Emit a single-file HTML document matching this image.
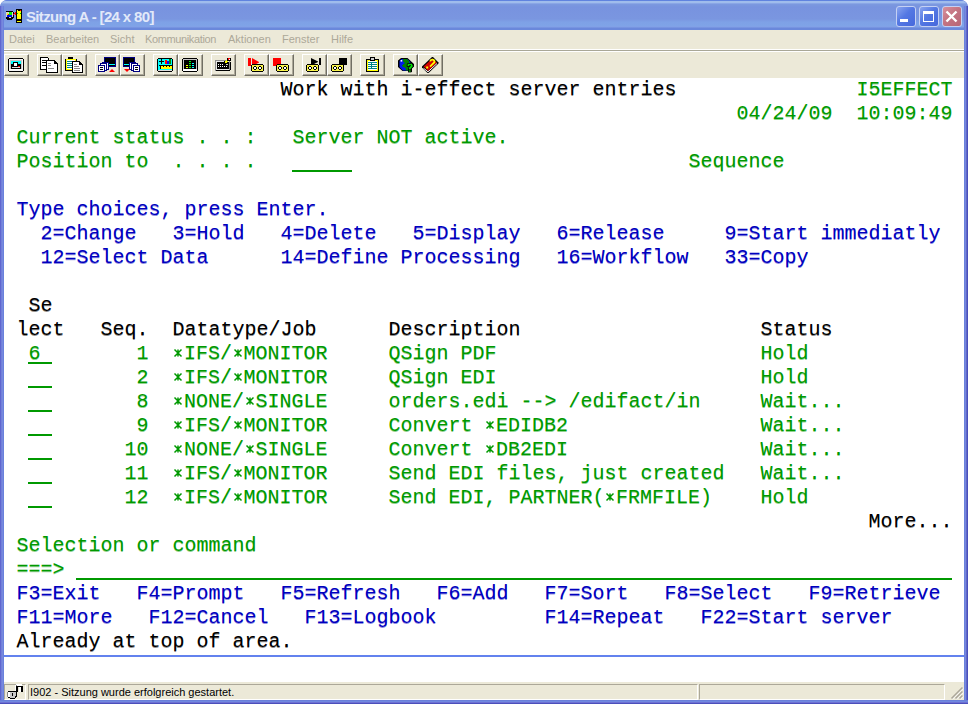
<!DOCTYPE html>
<html><head><meta charset="utf-8">
<style>
*{margin:0;padding:0;box-sizing:border-box}
html,body{width:968px;height:704px;overflow:hidden;background:#fff;position:relative}
body{font-family:"Liberation Sans",sans-serif}
#win{position:absolute;left:0;top:0;width:968px;height:704px;background:#6b83dc;border-radius:7px 7px 0 0}
#title{position:absolute;left:0;top:0;width:968px;height:30px;border-radius:8px 8px 0 0;overflow:hidden;
 background:linear-gradient(#6083df 0px,#6083df 1px,#a0bcec 1px,#a0bcec 3px,#8aa6e6 3px,#8aa6e6 4px,#7c99df 4px,#7893df 7px,#7a96e0 19px,#7ea1e6 22px,#7fa3e7 26px,#83a0e6 27px,#6a88db 28px,#6a88db 30px)}
#lb{position:absolute;left:0;top:6px;width:4px;height:698px;background:linear-gradient(90deg,#6066cf 0,#6066cf 1px,#7180da 1px,#7180da 2px,#7888de 2px,#7888de 3px,#6a82dc 3px)}
#rb{position:absolute;left:964px;top:6px;width:4px;height:698px;background:linear-gradient(90deg,#6b82dc 0,#6b82dc 1px,#7688de 1px,#7688de 2px,#6068c8 2px,#6068c8 3px,#4a50bb 3px)}
#bb{position:absolute;left:0;top:700px;width:968px;height:4px;background:linear-gradient(#6a7fd9 0,#6a7fd9 1px,#7089e0 1px,#7089e0 2px,#6f70d3 2px,#6f70d3 3px,#4a4fbb 3px)}
#ttext{position:absolute;left:26px;top:8px;font:bold 15px "Liberation Sans",sans-serif;color:#e2e9f9;letter-spacing:-0.65px;white-space:pre}
.tb{position:absolute;top:6px;width:20px;height:21px;border:1px solid #c4d0f3;border-radius:3px}
#menu{position:absolute;left:4px;top:30px;width:960px;height:20px;background:#ece9d8}
#menu span{position:absolute;top:3px;font-size:11px;color:#aca899}
#sep{position:absolute;left:4px;top:49px;width:960px;height:3px;background:linear-gradient(#fff 0,#fff 1px,#a9a797 1px,#a9a797 2px,#fff 2px)}
#sep2{position:absolute;left:4px;top:51px;width:960px;height:1px;background:#fff}
#tool{position:absolute;left:4px;top:52px;width:960px;height:26px;background:#ece9d8}
.btn{position:absolute;top:54px;width:25px;height:22px;border-top:1px solid #fff;border-left:1px solid #fff;border-right:1px solid #716f64;border-bottom:1px solid #716f64;box-shadow:inset -1px -1px 0 #aca899}
#term{position:absolute;left:4px;top:78px;width:960px;height:577px;background:#fff}
#scr{position:absolute;left:16.5px;top:78px}
#scr i{position:absolute;font-style:normal;font:normal 20px/24px "Liberation Mono",monospace;white-space:pre}
#scr u{position:absolute;height:2px;background:#009900}
.st{vertical-align:top;margin-left:-0.5px}.st path{stroke:currentColor;stroke-width:1.5;fill:none}
.g{color:#009900;text-shadow:0 1px 0 rgba(0,153,0,.45)}.b{color:#0000be;text-shadow:0 1px 0 rgba(0,0,190,.45)}.k{color:#000;text-shadow:0 1px 0 rgba(0,0,0,.45)}
#bline{position:absolute;left:4px;top:655px;width:960px;height:2px;background:#6382ee}
#blank{position:absolute;left:4px;top:657px;width:960px;height:25px;background:#fff}
#status{position:absolute;left:4px;top:682px;width:960px;height:18px;background:#ece9d8}
.pan{position:absolute;top:684px;height:16px;border-top:1px solid #aca899;border-left:1px solid #aca899;border-right:1px solid #fff;border-bottom:1px solid #fff}
#stext{position:absolute;left:30px;top:686px;font-size:11px;color:#000;white-space:pre}
</style></head><body>
<div id="win"></div>
<div id="title"><div id="ttext">Sitzung A - [24 x 80]</div></div><div id="lb"></div><div id="rb"></div><div id="bb"></div>
<div class="tb" style="left:896px;background:linear-gradient(135deg,#8aa5ef,#5478e3 45%,#4668dc)"><i style="position:absolute;left:3px;top:12px;width:8px;height:3px;background:#fff"></i></div>
<div class="tb" style="left:919px;background:linear-gradient(135deg,#8aa5ef,#5478e3 45%,#4668dc)"><i style="position:absolute;left:3px;top:4px;width:11px;height:11px;border:1px solid #fff;border-top-width:3px"></i></div>
<div class="tb" style="left:942px;background:linear-gradient(135deg,#d9909c,#c47482 45%,#b86676)"><svg style="position:absolute;left:0;top:0" width="20" height="20"><path d="M3.5 4.5l10 10M13.5 4.5l-10 10" stroke="#fff" stroke-width="2.4"/></svg></div>
<div id="menu"><span style="left:5px">Datei</span><span style="left:42px">Bearbeiten</span><span style="left:106px">Sicht</span><span style="left:141px;letter-spacing:-0.37px">Kommunikation</span><span style="left:224px">Aktionen</span><span style="left:278px">Fenster</span><span style="left:327px">Hilfe</span></div>
<div id="sep"></div>
<div id="tool"></div>
<div class="btn" style="left:4px"></div><div class="btn" style="left:37px"></div><div class="btn" style="left:62px"></div><div class="btn" style="left:95px"></div><div class="btn" style="left:120px"></div><div class="btn" style="left:153px"></div><div class="btn" style="left:178px"></div><div class="btn" style="left:211px"></div><div class="btn" style="left:244px"></div><div class="btn" style="left:269px"></div><div class="btn" style="left:302px"></div><div class="btn" style="left:327px"></div><div class="btn" style="left:360px"></div><div class="btn" style="left:393px"></div><div class="btn" style="left:418px"></div><svg style="position:absolute;left:0;top:0" width="460" height="80" shape-rendering="crispEdges">
<!-- title icon -->
<g>
<rect x="6" y="11" width="7" height="1" fill="#000"/>
<rect x="6" y="12" width="7" height="5" fill="#d8d8d0"/>
<rect x="13" y="12" width="1" height="6" fill="#000"/>
<rect x="7" y="13" width="1" height="3" fill="#ff0"/>
<rect x="9" y="12" width="3" height="3" fill="#0e0"/>
<rect x="8" y="14" width="1" height="1" fill="#f00"/>
<rect x="7" y="15" width="5" height="2" fill="#0010f0"/>
<rect x="6" y="17" width="7" height="3" fill="#000"/>
<rect x="9" y="17" width="2" height="1" fill="#d8d8c8"/>
<rect x="6" y="19" width="1" height="1" fill="#7b97e0"/>
<rect x="12" y="19" width="1" height="1" fill="#7b97e0"/>
<rect x="13" y="14" width="1" height="1" fill="#f00"/>
<rect x="14" y="13" width="1" height="1" fill="#f00"/>
<rect x="15" y="12" width="1" height="3" fill="#f00"/>
<rect x="16" y="9" width="6" height="14" fill="#000"/>
<rect x="17" y="10" width="4" height="9" fill="#ff0"/>
<rect x="18" y="10" width="2" height="1" fill="#000"/>
<rect x="20" y="10" width="1" height="1" fill="#f00"/>
<rect x="17" y="13" width="1" height="1" fill="#0c0"/>
<rect x="20" y="13" width="1" height="1" fill="#0c0"/>
<rect x="17" y="21" width="4" height="1" fill="#ff0"/>
</g>
<!-- 1 -->
<g>
<rect x="9" y="58" width="14" height="14" fill="#000"/>
<rect x="8" y="59" width="16" height="12" fill="#000"/>
<rect x="9" y="59" width="14" height="12" fill="#f4f4f4"/>
<rect x="10" y="60" width="12" height="9" fill="#c8c8c8"/>
<rect x="11" y="61" width="10" height="3" fill="#0ff"/>
<rect x="11" y="64" width="10" height="5" fill="#000"/>
<rect x="13" y="62" width="5" height="5" fill="#000"/>
<rect x="14" y="63" width="3" height="3" fill="#fff"/>
<rect x="12" y="67" width="8" height="1" fill="#ddd"/>
<rect x="18" y="66" width="2" height="1" fill="#f00"/>
<rect x="10" y="69" width="12" height="1" fill="#fff"/>
</g>
<!-- 2 copy -->
<g>
<path d="M40 57h7l2 2v11h-9z" fill="#000"/>
<path d="M41 58h6l1 1v10h-7z" fill="#fff"/>
<rect x="42" y="60" width="4" height="1" fill="#000"/>
<rect x="42" y="62" width="4" height="1" fill="#000"/>
<rect x="42" y="65" width="4" height="1" fill="#000"/>
<path d="M46 60h8l4 4v9h-12z" fill="#000"/>
<path d="M47 61h6l1 1v2h3v8h-10z" fill="#fff"/>
<rect x="48" y="63" width="3" height="1" fill="#888"/>
<rect x="48" y="65" width="3" height="1" fill="#888"/>
<rect x="48" y="68" width="6" height="1" fill="#888"/>
</g>
<!-- 3 paste -->
<g>
<rect x="68" y="57" width="5" height="2" fill="#000"/>
<rect x="65" y="59" width="12" height="12" fill="#000"/>
<rect x="66" y="59" width="10" height="11" fill="#ff0"/>
<rect x="67" y="60" width="8" height="9" fill="#fff"/>
<rect x="67" y="61" width="6" height="1" fill="#088"/>
<rect x="67" y="63" width="6" height="1" fill="#088"/>
<rect x="67" y="65" width="6" height="1" fill="#088"/>
<rect x="67" y="67" width="6" height="1" fill="#088"/>
<path d="M72 61h7l4 4v8h-11z" fill="#000"/>
<path d="M73 62h5l1 1v2h3v7h-9z" fill="#fff"/>
<rect x="74" y="64" width="3" height="1" fill="#888"/>
<rect x="74" y="66" width="5" height="1" fill="#888"/>
<rect x="74" y="68" width="6" height="1" fill="#888"/>
<rect x="74" y="70" width="6" height="1" fill="#888"/>
</g>
<!-- 4 -->
<g>
<rect x="104" y="57" width="12" height="10" fill="#000080"/>
<rect x="105" y="58" width="10" height="8" fill="#000"/>
<rect x="109" y="64" width="6" height="1" fill="#0ff"/>
<rect x="102" y="62" width="7" height="8" fill="#000080"/>
<rect x="103" y="63" width="5" height="6" fill="#fff"/>
<rect x="100" y="63" width="7" height="8" fill="#000080"/>
<rect x="101" y="64" width="5" height="6" fill="#fff"/>
<rect x="98" y="65" width="7" height="7" fill="#000080"/>
<rect x="99" y="66" width="5" height="5" fill="#fff"/>
<rect x="100" y="67" width="3" height="1" fill="#000"/>
<rect x="100" y="69" width="3" height="1" fill="#000"/>
<path d="M109 72h6l-3-3z" fill="#f00" shape-rendering="auto"/>
</g>
<!-- 5 -->
<g>
<rect x="123" y="57" width="12" height="10" fill="#000080"/>
<rect x="124" y="58" width="10" height="8" fill="#000"/>
<rect x="124" y="64" width="5" height="1" fill="#0ff"/>
<rect x="129" y="62" width="7" height="8" fill="#000080"/>
<rect x="130" y="63" width="5" height="6" fill="#fff"/>
<rect x="131" y="63" width="7" height="8" fill="#000080"/>
<rect x="132" y="64" width="5" height="6" fill="#fff"/>
<rect x="133" y="65" width="7" height="7" fill="#000080"/>
<rect x="134" y="66" width="5" height="5" fill="#fff"/>
<rect x="135" y="67" width="3" height="1" fill="#000"/>
<rect x="135" y="69" width="3" height="1" fill="#000"/>
<path d="M124 69h6l-3 3z" fill="#f00" shape-rendering="auto"/>
</g>
<!-- 6 -->
<g>
<rect x="158" y="58" width="14" height="14" fill="#000"/>
<rect x="157" y="59" width="16" height="12" fill="#000"/>
<rect x="158" y="59" width="14" height="12" fill="#0ff"/>
<rect x="158" y="70" width="14" height="1" fill="#ddd"/>
<rect x="159" y="61" width="5" height="1" fill="#000"/>
<rect x="161" y="59" width="1" height="5" fill="#000"/>
<rect x="165" y="60" width="2" height="4" fill="#f00"/>
<rect x="167" y="61" width="2" height="3" fill="#00f"/>
<rect x="169" y="59" width="2" height="5" fill="#080"/>
<rect x="159" y="65" width="13" height="1" fill="#000"/>
<rect x="160" y="66" width="12" height="3" fill="#ff0"/>
<rect x="160" y="66" width="1" height="3" fill="#000"/>
<rect x="163" y="66" width="1" height="1" fill="#000"/>
<rect x="166" y="66" width="1" height="1" fill="#000"/>
<rect x="169" y="66" width="1" height="1" fill="#000"/>
</g>
<!-- 7 -->
<g>
<rect x="183" y="58" width="14" height="14" fill="#000"/>
<rect x="182" y="59" width="16" height="12" fill="#000"/>
<rect x="183" y="59" width="14" height="12" fill="#c8c8c8"/>
<rect x="183" y="69" width="14" height="2" fill="#fff"/>
<rect x="184" y="60" width="12" height="9" fill="#000"/>
<rect x="189" y="61" width="2" height="1" fill="#0f0"/>
<rect x="189" y="63" width="2" height="1" fill="#0f0"/>
<rect x="189" y="65" width="2" height="1" fill="#0f0"/>
<rect x="189" y="67" width="2" height="1" fill="#0f0"/>
<rect x="192" y="63" width="2" height="1" fill="#0ff"/>
<rect x="192" y="65" width="2" height="1" fill="#0ff"/>
<rect x="192" y="67" width="2" height="1" fill="#0ff"/>
<rect x="186" y="65" width="2" height="1" fill="#ff0"/>
<rect x="186" y="67" width="2" height="1" fill="#ff0"/>
</g>
<!-- 8 keyboard -->
<g>
<rect x="215" y="60" width="15" height="11" fill="#8c8c8c"/>
<rect x="216" y="61" width="13" height="9" fill="#e8e8e8"/>
<rect x="217" y="62" width="12" height="7" fill="#000"/>
<rect x="216" y="70" width="14" height="1" fill="#000"/>
<rect x="230" y="62" width="1" height="8" fill="#000"/>
<rect x="218" y="64" width="1" height="1" fill="#fff"/><rect x="220" y="64" width="1" height="1" fill="#fff"/><rect x="222" y="64" width="1" height="1" fill="#fff"/><rect x="224" y="63" width="1" height="1" fill="#fff"/>
<rect x="218" y="66" width="1" height="1" fill="#fff"/><rect x="220" y="66" width="1" height="1" fill="#fff"/><rect x="222" y="66" width="1" height="1" fill="#fff"/><rect x="224" y="66" width="1" height="1" fill="#fff"/><rect x="226" y="66" width="1" height="1" fill="#fff"/>
<rect x="226" y="64" width="2" height="1" fill="#ccc"/>
<rect x="224" y="61" width="3" height="3" fill="#000"/>
<rect x="225" y="61" width="2" height="2" fill="#ff0"/>
<rect x="226" y="60" width="2" height="2" fill="#ff0"/>
<rect x="227" y="58" width="4" height="3" fill="#000"/>
<rect x="228" y="58" width="2" height="2" fill="#f00"/>
<rect x="229" y="59" width="1" height="1" fill="#fff"/>
</g>
<!-- 9 -->
<g>
<rect x="248" y="58" width="3" height="8" fill="#f00"/>
<path d="M252 58l7 4v0.5l-7 4z" fill="#f00" shape-rendering="auto"/>
<rect x="252" y="64" width="11" height="1" fill="#000"/>
<rect x="251" y="65" width="1" height="6" fill="#000"/>
<rect x="263" y="65" width="1" height="6" fill="#000"/>
<rect x="252" y="71" width="11" height="1" fill="#000"/>
<rect x="252" y="65" width="11" height="6" fill="#f6f24a"/>
<rect x="254" y="66" width="2" height="4" fill="#000"/>
<rect x="253" y="67" width="4" height="2" fill="#000"/>
<rect x="254" y="67" width="2" height="2" fill="#fff"/>
<rect x="259" y="66" width="2" height="4" fill="#000"/>
<rect x="258" y="67" width="4" height="2" fill="#000"/>
<rect x="259" y="67" width="2" height="2" fill="#fff"/>
</g>
<!-- 10 -->
<g>
<rect x="273" y="58" width="8" height="8" fill="#f00"/>
<rect x="277" y="64" width="11" height="1" fill="#000"/>
<rect x="276" y="65" width="1" height="6" fill="#000"/>
<rect x="288" y="65" width="1" height="6" fill="#000"/>
<rect x="277" y="71" width="11" height="1" fill="#000"/>
<rect x="277" y="65" width="11" height="6" fill="#f6f24a"/>
<rect x="279" y="66" width="2" height="4" fill="#000"/>
<rect x="278" y="67" width="4" height="2" fill="#000"/>
<rect x="279" y="67" width="2" height="2" fill="#fff"/>
<rect x="284" y="66" width="2" height="4" fill="#000"/>
<rect x="283" y="67" width="4" height="2" fill="#000"/>
<rect x="284" y="67" width="2" height="2" fill="#fff"/>
</g>
<!-- 11 -->
<g>
<path d="M311 58l7 3.5v0.5l-7 3.5z" fill="#000" shape-rendering="auto"/>
<rect x="319" y="58" width="2" height="7" fill="#000"/>
<rect x="307" y="64" width="11" height="1" fill="#000"/>
<rect x="306" y="65" width="1" height="6" fill="#000"/>
<rect x="318" y="65" width="1" height="6" fill="#000"/>
<rect x="307" y="71" width="11" height="1" fill="#000"/>
<rect x="307" y="65" width="11" height="6" fill="#f6f24a"/>
<rect x="309" y="66" width="2" height="4" fill="#000"/>
<rect x="308" y="67" width="4" height="2" fill="#000"/>
<rect x="309" y="67" width="2" height="2" fill="#fff"/>
<rect x="314" y="66" width="2" height="4" fill="#000"/>
<rect x="313" y="67" width="4" height="2" fill="#000"/>
<rect x="314" y="67" width="2" height="2" fill="#fff"/>
</g>
<!-- 12 -->
<g>
<rect x="339" y="58" width="8" height="7" fill="#000"/>
<rect x="332" y="64" width="11" height="1" fill="#000"/>
<rect x="331" y="65" width="1" height="6" fill="#000"/>
<rect x="343" y="65" width="1" height="6" fill="#000"/>
<rect x="332" y="71" width="11" height="1" fill="#000"/>
<rect x="332" y="65" width="11" height="6" fill="#f6f24a"/>
<rect x="334" y="66" width="2" height="4" fill="#000"/>
<rect x="333" y="67" width="4" height="2" fill="#000"/>
<rect x="334" y="67" width="2" height="2" fill="#fff"/>
<rect x="339" y="66" width="2" height="4" fill="#000"/>
<rect x="338" y="67" width="4" height="2" fill="#000"/>
<rect x="339" y="67" width="2" height="2" fill="#fff"/>
</g>
<!-- 13 clipboard -->
<g>
<rect x="366" y="59" width="13" height="13" fill="#000"/>
<rect x="367" y="60" width="11" height="11" fill="#ff0"/>
<rect x="368" y="61" width="9" height="9" fill="#fff"/>
<rect x="368" y="62" width="9" height="1" fill="#088"/>
<rect x="368" y="64" width="9" height="1" fill="#088"/>
<rect x="368" y="66" width="9" height="1" fill="#088"/>
<rect x="368" y="68" width="9" height="1" fill="#088"/>
<rect x="371" y="62" width="1" height="7" fill="#088"/>
<rect x="370" y="57" width="5" height="4" fill="#000"/>
<rect x="371" y="58" width="3" height="2" fill="#ccc"/>
</g>
<!-- 14 globe -->
<g shape-rendering="auto">
<path d="M401 58h6.5l6.5 6v2.5l-2 2v3.5h-3l-1-1h-5.5l-4.5-4v-6.5z" fill="#000"/>
<path d="M401.5 59h5.5l3 2.5 1 5-2.5 4h-5.5l-3.5-3.5v-6z" fill="#0018f0"/>
<path d="M403 59h4l2.5 2.5-0.5 2.5-3 1.5h-3v-1l2-1.5-2-1.5v-1z" fill="#008000"/>
<path d="M402 65h2.5l2 -0.5 2 0.5 0.5 2-1 3.5h-2l-0.5-2.5-3-1.5z" fill="#008000"/>
<rect x="400.6" y="60" width="1.6" height="1.6" fill="#fff"/>
<path d="M407.5 63.5h4l1.5 1.5v2l-2 1.5v1.5h-2.5v-2.5l2-1.5v-0.5h-1v1h-2.5z" fill="#00e000" stroke="#000" stroke-width="0.8"/>
<rect x="408.5" y="70" width="2.5" height="2" fill="#00e000" stroke="#000" stroke-width="0.8"/>
</g>
<!-- 15 book -->
<g shape-rendering="auto">
<path d="M422 66.5L432 57h1L438.5 62.5v1L428.5 73h-1L422 67.5z" fill="#000"/>
<path d="M423.6 66.6L432.3 58.4 437 62.8 428.2 71z" fill="#d00000"/>
<path d="M423.5 68.2L428 71.8 437 63.5" fill="none" stroke="#fff" stroke-width="1"/>
<path d="M430.2 61.4a2 2 0 0 1 4.2 0.8l-2.4 2.4-2 2" fill="none" stroke="#ffff00" stroke-width="1.8"/>
<rect x="426.2" y="66.5" width="2" height="2" fill="#ffff00"/>
</g>
</svg>

<div id="term"></div>
<div id="scr">
<i class="k" style="top:0px;left:264px">Work with i-effect server entries</i>
<i class="g" style="top:0px;left:840px">I5EFFECT</i>
<i class="g" style="top:24px;left:720px">04/24/09</i>
<i class="g" style="top:24px;left:840px">10:09:49</i>
<i class="g" style="top:48px;left:0px">Current status . . :</i>
<i class="g" style="top:48px;left:276px">Server NOT active.</i>
<i class="g" style="top:72px;left:0px">Position to  . . . .</i>
<i class="g" style="top:72px;left:672px">Sequence</i>
<i class="b" style="top:120px;left:0px">Type choices, press Enter.</i>
<i class="b" style="top:144px;left:24px">2=Change</i>
<i class="b" style="top:144px;left:156px">3=Hold</i>
<i class="b" style="top:144px;left:264px">4=Delete</i>
<i class="b" style="top:144px;left:396px">5=Display</i>
<i class="b" style="top:144px;left:540px">6=Release</i>
<i class="b" style="top:144px;left:708px">9=Start immediatly</i>
<i class="b" style="top:168px;left:24px">12=Select Data</i>
<i class="b" style="top:168px;left:264px">14=Define Processing</i>
<i class="b" style="top:168px;left:540px">16=Workflow</i>
<i class="b" style="top:168px;left:708px">33=Copy</i>
<i class="k" style="top:216px;left:12px">Se</i>
<i class="k" style="top:240px;left:0px">lect</i>
<i class="k" style="top:240px;left:84px">Seq.</i>
<i class="k" style="top:240px;left:156px">Datatype/Job</i>
<i class="k" style="top:240px;left:372px">Description</i>
<i class="k" style="top:240px;left:744px">Status</i>
<i class="g" style="top:264px;left:12px">6</i>
<i class="g" style="top:264px;left:120px">1</i>
<i class="g" style="top:264px;left:156px"><svg class="st" width="12" height="24"><path d="M2.5 7.5l7 7M9.5 7.5l-7 7M6 7.5v7"/></svg>IFS/<svg class="st" width="12" height="24"><path d="M2.5 7.5l7 7M9.5 7.5l-7 7M6 7.5v7"/></svg>MONITOR</i>
<i class="g" style="top:264px;left:372px">QSign PDF</i>
<i class="g" style="top:264px;left:744px">Hold</i>
<i class="g" style="top:288px;left:120px">2</i>
<i class="g" style="top:288px;left:156px"><svg class="st" width="12" height="24"><path d="M2.5 7.5l7 7M9.5 7.5l-7 7M6 7.5v7"/></svg>IFS/<svg class="st" width="12" height="24"><path d="M2.5 7.5l7 7M9.5 7.5l-7 7M6 7.5v7"/></svg>MONITOR</i>
<i class="g" style="top:288px;left:372px">QSign EDI</i>
<i class="g" style="top:288px;left:744px">Hold</i>
<i class="g" style="top:312px;left:120px">8</i>
<i class="g" style="top:312px;left:156px"><svg class="st" width="12" height="24"><path d="M2.5 7.5l7 7M9.5 7.5l-7 7M6 7.5v7"/></svg>NONE/<svg class="st" width="12" height="24"><path d="M2.5 7.5l7 7M9.5 7.5l-7 7M6 7.5v7"/></svg>SINGLE</i>
<i class="g" style="top:312px;left:372px">orders.edi --&gt; /edifact/in</i>
<i class="g" style="top:312px;left:744px">Wait...</i>
<i class="g" style="top:336px;left:120px">9</i>
<i class="g" style="top:336px;left:156px"><svg class="st" width="12" height="24"><path d="M2.5 7.5l7 7M9.5 7.5l-7 7M6 7.5v7"/></svg>IFS/<svg class="st" width="12" height="24"><path d="M2.5 7.5l7 7M9.5 7.5l-7 7M6 7.5v7"/></svg>MONITOR</i>
<i class="g" style="top:336px;left:372px">Convert <svg class="st" width="12" height="24"><path d="M2.5 7.5l7 7M9.5 7.5l-7 7M6 7.5v7"/></svg>EDIDB2</i>
<i class="g" style="top:336px;left:744px">Wait...</i>
<i class="g" style="top:360px;left:108px">10</i>
<i class="g" style="top:360px;left:156px"><svg class="st" width="12" height="24"><path d="M2.5 7.5l7 7M9.5 7.5l-7 7M6 7.5v7"/></svg>NONE/<svg class="st" width="12" height="24"><path d="M2.5 7.5l7 7M9.5 7.5l-7 7M6 7.5v7"/></svg>SINGLE</i>
<i class="g" style="top:360px;left:372px">Convert <svg class="st" width="12" height="24"><path d="M2.5 7.5l7 7M9.5 7.5l-7 7M6 7.5v7"/></svg>DB2EDI</i>
<i class="g" style="top:360px;left:744px">Wait...</i>
<i class="g" style="top:384px;left:108px">11</i>
<i class="g" style="top:384px;left:156px"><svg class="st" width="12" height="24"><path d="M2.5 7.5l7 7M9.5 7.5l-7 7M6 7.5v7"/></svg>IFS/<svg class="st" width="12" height="24"><path d="M2.5 7.5l7 7M9.5 7.5l-7 7M6 7.5v7"/></svg>MONITOR</i>
<i class="g" style="top:384px;left:372px">Send EDI files, just created</i>
<i class="g" style="top:384px;left:744px">Wait...</i>
<i class="g" style="top:408px;left:108px">12</i>
<i class="g" style="top:408px;left:156px"><svg class="st" width="12" height="24"><path d="M2.5 7.5l7 7M9.5 7.5l-7 7M6 7.5v7"/></svg>IFS/<svg class="st" width="12" height="24"><path d="M2.5 7.5l7 7M9.5 7.5l-7 7M6 7.5v7"/></svg>MONITOR</i>
<i class="g" style="top:408px;left:372px">Send EDI, PARTNER(<svg class="st" width="12" height="24"><path d="M2.5 7.5l7 7M9.5 7.5l-7 7M6 7.5v7"/></svg>FRMFILE)</i>
<i class="g" style="top:408px;left:744px">Hold</i>
<i class="k" style="top:432px;left:852px">More...</i>
<i class="g" style="top:456px;left:0px">Selection or command</i>
<i class="g" style="top:480px;left:0px">===&gt;</i>
<i class="b" style="top:504px;left:0px">F3=Exit</i>
<i class="b" style="top:504px;left:120px">F4=Prompt</i>
<i class="b" style="top:504px;left:264px">F5=Refresh</i>
<i class="b" style="top:504px;left:420px">F6=Add</i>
<i class="b" style="top:504px;left:528px">F7=Sort</i>
<i class="b" style="top:504px;left:648px">F8=Select</i>
<i class="b" style="top:504px;left:792px">F9=Retrieve</i>
<i class="b" style="top:528px;left:0px">F11=More</i>
<i class="b" style="top:528px;left:132px">F12=Cancel</i>
<i class="b" style="top:528px;left:288px">F13=Logbook</i>
<i class="b" style="top:528px;left:528px">F14=Repeat</i>
<i class="b" style="top:528px;left:684px">F22=Start server</i>
<i class="k" style="top:552px;left:0px">Already at top of area.</i>
<u style="top:92px;left:275.5px;width:60px"></u>
<u style="top:500px;left:59.5px;width:876px"></u>
<u style="top:284px;left:11.5px;width:24px"></u>
<u style="top:308px;left:11.5px;width:24px"></u>
<u style="top:332px;left:11.5px;width:24px"></u>
<u style="top:356px;left:11.5px;width:24px"></u>
<u style="top:380px;left:11.5px;width:24px"></u>
<u style="top:404px;left:11.5px;width:24px"></u>
<u style="top:428px;left:11.5px;width:24px"></u>
</div>
<div id="bline"></div><div id="blank"></div>
<div id="status"></div>
<div class="pan" style="left:4px;width:22px"></div>
<div class="pan" style="left:28px;width:670px"></div>
<div class="pan" style="left:699px;width:246px"></div>
<svg style="position:absolute;left:0;top:680px" width="30" height="22" shape-rendering="crispEdges">
<rect x="15" y="5" width="1" height="6" fill="#fff"/>
<rect x="16" y="4" width="6" height="1" fill="#fff"/>
<rect x="17" y="5" width="5" height="2" fill="#fff"/>
<rect x="16" y="5" width="1" height="1" fill="#888"/>
<rect x="17" y="6" width="5" height="1" fill="#000"/>
<rect x="16" y="6" width="2" height="6" fill="#000"/>
<rect x="21" y="6" width="2" height="6" fill="#000"/>
<rect x="19" y="7" width="2" height="5" fill="#fff"/>
<rect x="8" y="11" width="8" height="1" fill="#000"/>
<rect x="7" y="12" width="1" height="5" fill="#888"/>
<rect x="8" y="12" width="8" height="6" fill="#c8c8c8"/>
<rect x="8" y="12" width="2" height="5" fill="#fff"/>
<rect x="16" y="11" width="1" height="6" fill="#000"/>
<rect x="15" y="16" width="1" height="2" fill="#000"/>
<rect x="8" y="17" width="2" height="1" fill="#000"/>
<rect x="10" y="18" width="5" height="1" fill="#000"/>
<rect x="12" y="13" width="1" height="3" fill="#000"/>
</svg>
<svg style="position:absolute;left:946px;top:684px" width="18" height="16">
<path d="M6 15L17 4M10 15L17 8M14 15L17 12" stroke="#fff" stroke-width="1.6"/>
<path d="M5.5 14.5L16.5 3.5M9.5 14.5L16.5 7.5M13.5 14.5L16.5 11.5" stroke="#aca899" stroke-width="1.6"/>
</svg>
<div id="stext">I902 - Sitzung wurde erfolgreich gestartet.</div>
</body></html>
